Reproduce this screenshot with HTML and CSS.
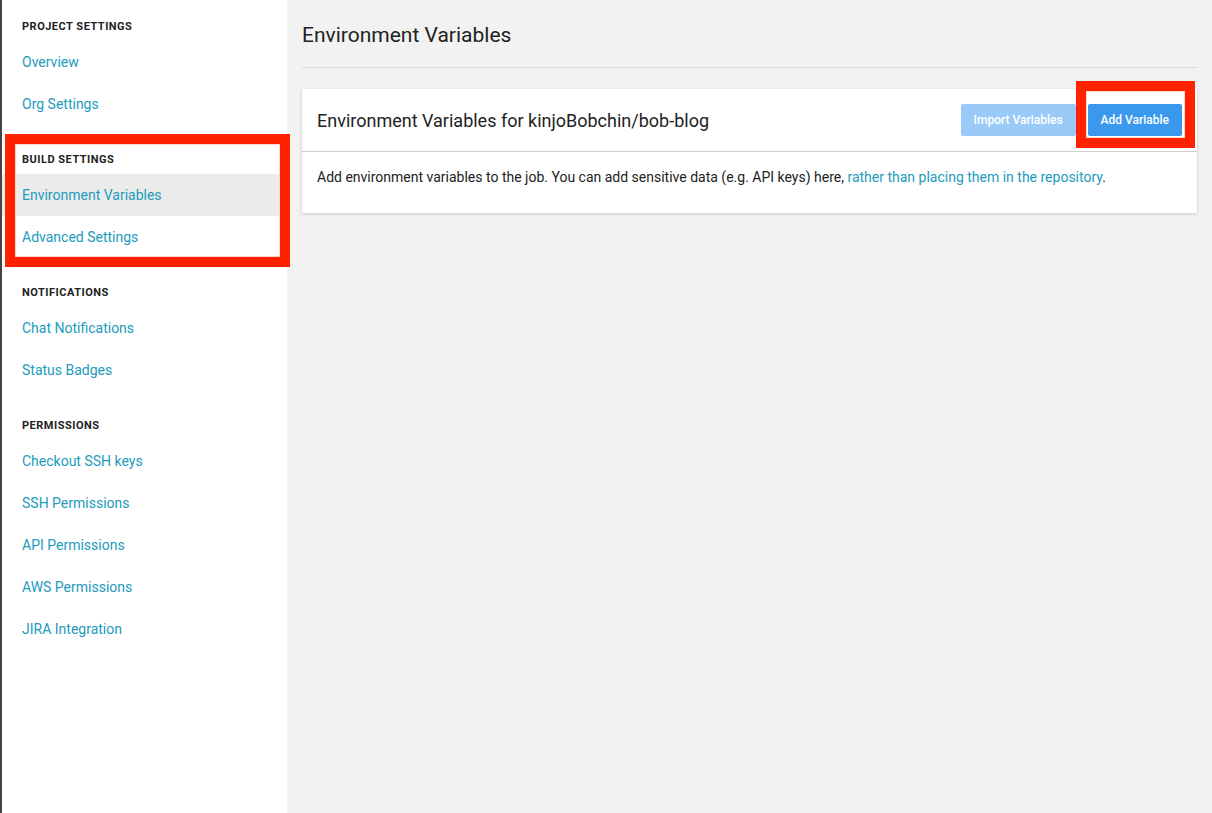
FILE: index.html
```html
<!DOCTYPE html>
<html lang="en">
<head>
    <meta charset="UTF-8">
    <meta name="viewport" content="width=device-width, initial-scale=1.0">
    <title>Environment Variables</title>
    <link rel="stylesheet" href="styles.css">
</head>
<body>
    <div class="sidebar">
        <div class="nav-section">
            <h3>Project Settings</h3>
            <ul>
                <li><a href="#">Overview</a></li>
                <li><a href="#">Org Settings</a></li>
            </ul>
        </div>
        <div class="nav-section">
            <h3>Build Settings</h3>
            <ul>
                <li class="active"><a href="#">Environment Variables</a></li>
                <li><a href="#">Advanced Settings</a></li>
            </ul>
        </div>
        <div class="nav-section">
            <h3>Notifications</h3>
            <ul>
                <li><a href="#">Chat Notifications</a></li>
                <li><a href="#">Status Badges</a></li>
            </ul>
        </div>
        <div class="nav-section">
            <h3>Permissions</h3>
            <ul>
                <li><a href="#">Checkout SSH keys</a></li>
                <li><a href="#">SSH Permissions</a></li>
                <li><a href="#">API Permissions</a></li>
                <li><a href="#">AWS Permissions</a></li>
                <li><a href="#">JIRA Integration</a></li>
            </ul>
        </div>
    </div>

    <div class="content">
        <div class="page-header">
            <h1>Environment Variables</h1>
        </div>

        <div class="card">
            <div class="card-header">
                <h2>Environment Variables for kinjoBobchin/bob-blog</h2>
                <div class="actions">
                    <button class="btn btn-light">Import Variables</button>
                    <button class="btn btn-primary">Add Variable</button>
                </div>
            </div>
            <div class="card-body">
                <p>Add environment variables to the job. You can add sensitive data (e.g. API keys) here, <a href="#">rather than placing them in the repository</a>.</p>
            </div>
        </div>
    </div>

    <!-- annotation boxes -->
    <div class="mark mark-nav"></div>
    <div class="mark mark-btn"></div>
</body>
</html>
```

FILE: styles.css
```css
body {
    margin: 0;
    font-family: Roboto, "Liberation Sans", Arial, sans-serif;
    display: flex;
    height: 100vh;
    background-color: #f2f2f2;
    color: #222;
}

a {
    color: #229bbc;
    text-decoration: none;
}

.sidebar {
    width: 285px;
    flex-shrink: 0;
    background-color: #fff;
    border-left: 2px solid #444;
    padding-top: 20px;
}

.nav-section + .nav-section {
    margin-top: 28px;
}

.nav-section h3 {
    margin: 0 0 7px;
    padding: 0 20px;
    font-size: 11px;
    line-height: 14px;
    font-weight: 700;
    letter-spacing: 0.5px;
    text-transform: uppercase;
    color: #222;
}

.nav-section ul {
    list-style: none;
    margin: 0;
    padding: 0;
}

.nav-section li a {
    display: block;
    padding: 0 20px;
    height: 42px;
    line-height: 42px;
    font-size: 14px;
}

.nav-section li.active {
    background-color: #ebebeb;
}

.content {
    flex-grow: 1;
    padding: 0 15px;
}

.page-header {
    padding: 22px 0 19px;
    border-bottom: 1px solid #dcdcdc;
    margin-bottom: 21px;
}

.page-header h1 {
    margin: 0;
    font-size: 21px;
    line-height: 26px;
    font-weight: 400;
    color: #222;
}

.card {
    background-color: #fff;
    box-shadow: 0 1px 3px rgba(0, 0, 0, 0.18);
}

.card-header {
    display: flex;
    align-items: center;
    justify-content: space-between;
    padding: 15px;
    border-bottom: 1px solid #cfcfcf;
}

.card-header h2 {
    margin: 0;
    font-size: 18px;
    font-weight: 400;
    color: #222;
}

.actions {
    display: flex;
    gap: 12px;
}

.btn {
    height: 32px;
    padding: 0 13px;
    border: none;
    border-radius: 2px;
    font-family: inherit;
    font-size: 12px;
    font-weight: 500;
    color: #fff;
    cursor: pointer;
}

.btn-light {
    background-color: #9acbf8;
}

.btn-primary {
    background-color: #3a99ec;
}

.card-body {
    padding: 15px 15px 25px;
}

.card-body p {
    margin: 0;
    font-size: 14px;
    line-height: 21px;
}

/* Red annotation boxes */
.mark {
    position: absolute;
    border: 10px solid #ff2200;
    box-shadow: inset 0 0 0 1px #ffd6cf;
}

.mark-nav {
    left: 5px;
    top: 134px;
    width: 265px;
    height: 113px;
}

.mark-btn {
    left: 1076px;
    top: 81px;
    width: 99px;
    height: 47px;
}
```
